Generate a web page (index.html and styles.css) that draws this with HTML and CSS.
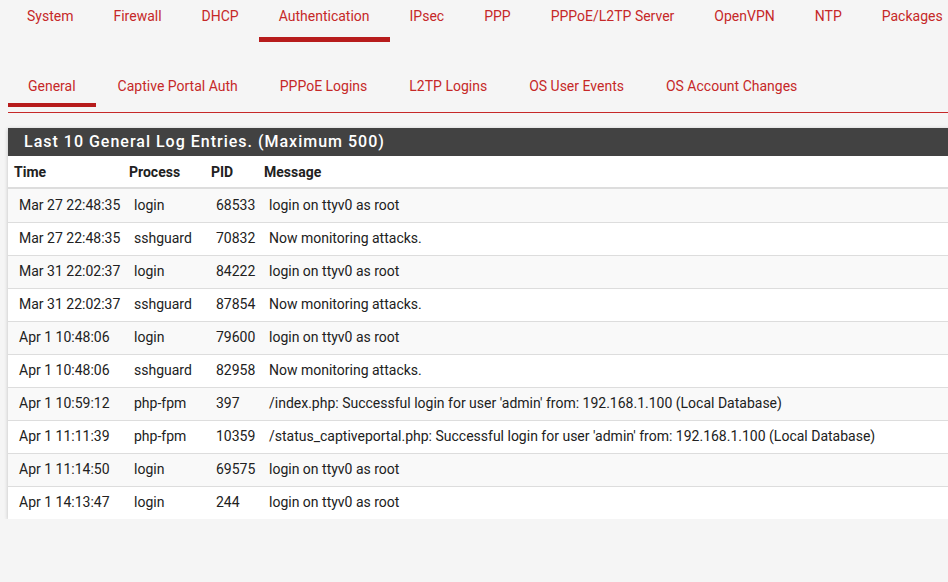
FILE: index.html
```html
<!DOCTYPE html>
<html>
<head>
<meta charset="utf-8">
<link rel="stylesheet" href="styles.css">
</head>
<body>
<div class="page">
  <nav class="tabs primary">
    <a class="tab">System</a>
    <a class="tab">Firewall</a>
    <a class="tab">DHCP</a>
    <a class="tab active">Authentication</a>
    <a class="tab">IPsec</a>
    <a class="tab">PPP</a>
    <a class="tab">PPPoE/L2TP Server</a>
    <a class="tab">OpenVPN</a>
    <a class="tab">NTP</a>
    <a class="tab">Packages</a>
  </nav>
  <nav class="tabs secondary">
    <a class="tab active">General</a>
    <a class="tab">Captive Portal Auth</a>
    <a class="tab">PPPoE Logins</a>
    <a class="tab">L2TP Logins</a>
    <a class="tab">OS User Events</a>
    <a class="tab">OS Account Changes</a>
  </nav>
  <section class="panel">
    <h2 class="panel-title">Last 10 General Log Entries. (Maximum 500)</h2>
    <table class="log">
      <colgroup>
        <col class="c-time"><col class="c-proc"><col class="c-pid"><col class="c-msg">
      </colgroup>
      <thead>
        <tr><th>Time</th><th>Process</th><th>PID</th><th>Message</th></tr>
      </thead>
      <tbody>
        <tr><td>Mar 27 22:48:35</td><td>login</td><td>68533</td><td>login on ttyv0 as root</td></tr>
        <tr><td>Mar 27 22:48:35</td><td>sshguard</td><td>70832</td><td>Now monitoring attacks.</td></tr>
        <tr><td>Mar 31 22:02:37</td><td>login</td><td>84222</td><td>login on ttyv0 as root</td></tr>
        <tr><td>Mar 31 22:02:37</td><td>sshguard</td><td>87854</td><td>Now monitoring attacks.</td></tr>
        <tr><td>Apr 1 10:48:06</td><td>login</td><td>79600</td><td>login on ttyv0 as root</td></tr>
        <tr><td>Apr 1 10:48:06</td><td>sshguard</td><td>82958</td><td>Now monitoring attacks.</td></tr>
        <tr><td>Apr 1 10:59:12</td><td>php-fpm</td><td>397</td><td>/index.php: Successful login for user 'admin' from: 192.168.1.100 (Local Database)</td></tr>
        <tr><td>Apr 1 11:11:39</td><td>php-fpm</td><td>10359</td><td>/status_captiveportal.php: Successful login for user 'admin' from: 192.168.1.100 (Local Database)</td></tr>
        <tr><td>Apr 1 11:14:50</td><td>login</td><td>69575</td><td>login on ttyv0 as root</td></tr>
        <tr><td>Apr 1 14:13:47</td><td>login</td><td>244</td><td>login on ttyv0 as root</td></tr>
      </tbody>
    </table>
  </section>
</div>
</body>
</html>
```
FILE: styles.css
```css
html, body {
  margin: 0;
  padding: 0;
  background: #f5f5f5;
  overflow: hidden;
}
body {
  font-family: Roboto, "Liberation Sans", sans-serif;
  font-size: 14px;
  color: #212121;
}
.page {
  width: 1010px;
  padding: 0 0 0 8px;
}
.tabs {
  display: flex;
}
.tab {
  display: block;
  color: #c62828;
  text-decoration: none;
  padding: 0 20px;
  white-space: nowrap;
}
.primary {
  margin-left: -1px;
  height: 42px;
}
.primary .tab {
  padding-top: 7px;
  height: 30px;
  border-bottom: 5px solid transparent;
  line-height: 18px;
}
.primary .tab.active {
  border-bottom-color: #b71c1c;
}
.secondary {
  gap: 2px;
  margin-top: 35px;
  border-bottom: 1px solid #c62828;
  height: 35px;
}
.secondary .tab {
  line-height: 18px;
  height: 26px;
  border-bottom: 4px solid transparent;
  margin-bottom: -1px;
}
.secondary .tab.active {
  border-bottom-color: #b71c1c;
}
.panel {
  margin-top: 15px;
  background: #fff;
  box-shadow: 0 1px 4px rgba(0,0,0,0.22);
}
.panel-title {
  margin: 0;
  background: #424242;
  color: #fff;
  font-size: 16px;
  font-weight: 500;
  letter-spacing: 1px;
  line-height: 28px;
  padding: 0 0 0 16px;
}
.log {
  width: 100%;
  border-collapse: collapse;
  table-layout: fixed;
}
.c-time { width: 115px; }
.c-proc { width: 82px; }
.c-pid { width: 53px; }
.log th {
  text-align: left;
  font-weight: 700;
  padding: 0 6px;
  height: 31px;
  border-bottom: 2px solid #dddddd;
  line-height: 18px;
}
.log td {
  padding: 0 6px 3px 11px;
  height: 29px;
  border-top: 1px solid #dddddd;
  white-space: nowrap;
  line-height: 18px;
}
.log thead + tbody tr:first-child td {
  border-top: 0;
  padding-bottom: 1px;
  height: 32px;
}
.log tbody tr:nth-child(odd) {
  background: #f9f9f9;
}
```
